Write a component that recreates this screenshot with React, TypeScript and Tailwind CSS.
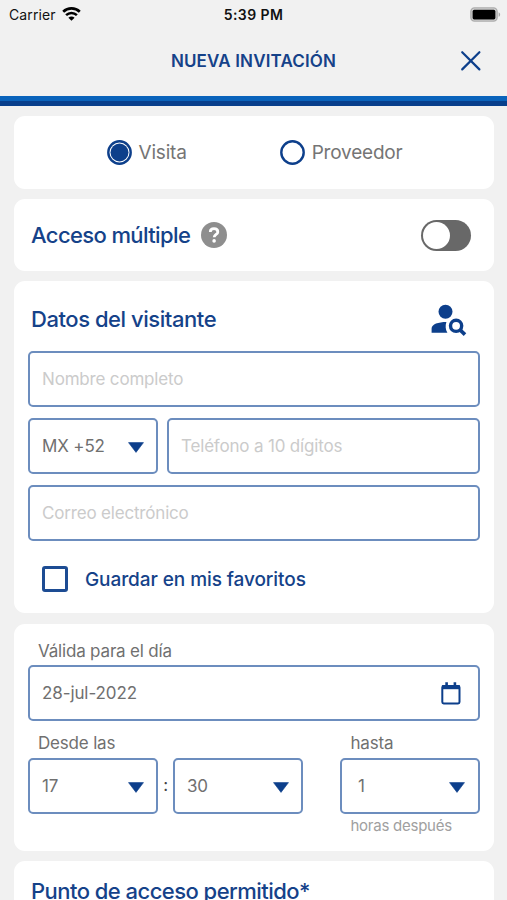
import React, { useState } from 'react';

function WifiIcon() {
  return (
    <svg width="19" height="14" viewBox="0 0 19 14" fill="none" stroke="#000">
      <path d="M1.2 4.7C5.8 0.3 13.2 0.3 17.8 4.7" strokeWidth="2.7" />
      <path d="M4.1 8.1C7.2 5.2 11.8 5.2 14.9 8.1" strokeWidth="2.6" />
      <path d="M9.5 13.8L6.4 10.7C8.2 9.2 10.8 9.2 12.6 10.7Z" fill="#000" stroke="none" />
    </svg>
  );
}

function BatteryIcon() {
  return (
    <svg width="31" height="15" viewBox="0 0 31 15">
      <rect x="0.9" y="0.9" width="26.2" height="13.2" rx="3.6" fill="#d2d2d2" stroke="#acacac" strokeWidth="1.4" />
      <rect x="2.6" y="2.8" width="22.8" height="9.6" rx="1.6" fill="#000" />
      <path d="M28.6 5.2C30.6 6 30.6 9 28.6 9.8Z" fill="#a9a9a9" />
    </svg>
  );
}

function HelpIcon() {
  return (
    <svg width="26" height="26" viewBox="0 0 26 26" fill="none">
      <circle cx="13" cy="13" r="13" fill="#8e8e8e" />
      <path d="M9.3 9.9C9.3 7.7 10.9 6.7 13 6.7C15.2 6.7 16.8 7.9 16.8 9.9C16.8 12.5 13.2 12.4 13.2 15.3" stroke="#fff" strokeWidth="2.8" />
      <circle cx="13.1" cy="18.9" r="1.8" fill="#fff" />
    </svg>
  );
}

function PersonSearchIcon() {
  return (
    <svg width="36" height="33" viewBox="0 0 36 33" fill="none" className="mt-[3px]">
      <circle cx="14.5" cy="7.8" r="7" fill="#0d3f8b" />
      <path d="M0.6 28.8V24.4C0.6 20.2 7.4 18 15.4 18C14.2 21.4 14.4 25.4 16.4 28.8Z" fill="#0d3f8b" />
      <circle cx="25.1" cy="21.8" r="5.6" stroke="#0d3f8b" strokeWidth="3.4" />
      <path d="M28.8 25.6L34 30.6" stroke="#0d3f8b" strokeWidth="3.6" />
    </svg>
  );
}

function CalendarIcon() {
  return (
    <svg width="20" height="23" viewBox="0 0 20 23" fill="none">
      <path d="M5.6 0.3V4M13.9 0.3V4" stroke="#0d3f8b" strokeWidth="2.6" />
      <rect x="1.3" y="4" width="17.2" height="17.4" rx="1.4" stroke="#0d3f8b" strokeWidth="2" />
      <path d="M1 3.2H18.8V7.2H1Z" fill="#0d3f8b" />
    </svg>
  );
}

function Caret() {
  return (
    <svg width="16" height="11" viewBox="0 0 16 11" className="mt-[3px] shrink-0">
      <path d="M0.5 0.6H15.5L8 10.4Z" fill="#0d3f8b" stroke="#0d3f8b" strokeWidth="0.6" strokeLinejoin="round" />
    </svg>
  );
}

function Select({ value, className }: { value: string; className: string }) {
  return (
    <button
      type="button"
      className={`flex h-14 shrink-0 items-center justify-between rounded-[5px] border-2 border-[#6c8dbe] text-[17px] tracking-[-0.15px] text-[#707070] ${className}`}
    >
      <span className="pt-px">{value}</span>
      <Caret />
    </button>
  );
}

function Radio({ label, checked, onSelect }: { label: string; checked: boolean; onSelect: () => void }) {
  return (
    <button type="button" onClick={onSelect} className="flex items-center gap-[7px]">
      <svg width="25" height="25" viewBox="0 0 25 25" fill="none">
        <circle cx="12.5" cy="12.5" r="11.2" stroke="#0d3f8b" strokeWidth="2.4" />
        {checked && <circle cx="12.5" cy="12.5" r="9" fill="#0d3f8b" />}
      </svg>
      <span className="pt-[2px] text-[19px] tracking-[-0.2px] text-[#757575]">{label}</span>
    </button>
  );
}

const fieldClass =
  'block h-14 rounded-[5px] border-2 border-[#6c8dbe] bg-white px-3 text-[17px] tracking-[-0.18px] text-[#707070] placeholder:text-[#cbcbcb] outline-none';

const titleClass = 'text-[22px] leading-[30px] font-medium text-[#154289]';

export default function App() {
  const [type, setType] = useState('visita');
  const [saved, setSaved] = useState(false);

  return (
    <div className="h-[900px] w-[507px] overflow-hidden bg-[#f1f1f1] font-['Inter',sans-serif]">
      {/* Status bar */}
      <div className="grid h-7 grid-cols-[1fr_80px_1fr] items-center pr-[6px] pl-[9px] text-[14px] text-[#111]">
        <div className="flex items-center gap-1.5">
          <span className="tracking-[0.1px]">Carrier</span>
          <WifiIcon />
        </div>
        <span className="-ml-[3px] text-center font-semibold tracking-[0.4px]">5:39 PM</span>
        <div className="flex justify-end">
          <BatteryIcon />
        </div>
      </div>

      {/* Header */}
      <header className="grid h-[68px] grid-cols-[60px_1fr_60px] items-center">
        <span />
        <h1 className="text-center text-[17px] font-semibold tracking-[0.15px] text-[#154289]">NUEVA INVITACIÓN</h1>
        <button type="button" aria-label="Cerrar" className="-mt-[2px] ml-[13px]">
          <svg width="22" height="22" viewBox="0 0 22 22" stroke="#0d3f8b" strokeWidth="2.2" strokeLinecap="round">
            <path d="M2.2 2.2L19.4 19.4M19.4 2.2L2.2 19.4" />
          </svg>
        </button>
      </header>
      <div className="h-[10px] border-b-[5px] border-[#083f8c] bg-[#0a63bb]" />

      <main className="flex flex-col gap-[10px] pt-[10px] pr-[13px] pl-[14px]">
        <section className="flex h-[73px] items-center gap-[93px] rounded-[11px] bg-white pl-[92.5px]">
          <Radio label="Visita" checked={type === 'visita'} onSelect={() => setType('visita')} />
          <Radio label="Proveedor" checked={type === 'proveedor'} onSelect={() => setType('proveedor')} />
        </section>

        <section className="flex h-[72px] items-center gap-[11px] rounded-[11px] bg-white pr-[23px] pl-[17px]">
          <h2 className={`${titleClass} tracking-[-0.62px]`}>Acceso múltiple</h2>
          <HelpIcon />
          <button type="button" role="switch" aria-checked="false" className="ml-auto flex h-[31px] w-[50px] items-center rounded-full bg-[#686868] pl-[1.5px]">
            <span className="size-[27px] rounded-full bg-white" />
          </button>
        </section>

        <section className="h-[332px] rounded-[11px] bg-white px-[14px] pt-4">
          <div className="flex h-[43px] items-center justify-between pr-[13px] pl-[3px]">
            <h2 className={`${titleClass} tracking-[-0.45px]`}>Datos del visitante</h2>
            <PersonSearchIcon />
          </div>
          <div className="mt-[11px] flex flex-col gap-[11px]">
            <input placeholder="Nombre completo" className={`${fieldClass} w-full`} />
            <div className="flex gap-[9px]">
              <Select value="MX +52" className="w-[130px] px-3" />
              <input placeholder="Teléfono a 10 dígitos" className={`${fieldClass} min-w-0 flex-1`} />
            </div>
            <input placeholder="Correo electrónico" className={`${fieldClass} w-full`} />
          </div>
          <label className="mt-[23px] flex items-center gap-[17px] pl-[14px]">
            <input
              type="checkbox"
              checked={saved}
              onChange={() => setSaved(!saved)}
              className="size-[26px] appearance-none rounded-[3px] border-[3px] border-[#1d4c93] checked:bg-[#0d3f8b]"
            />
            <span className="pt-[2px] text-[19px] font-medium tracking-[-0.08px] text-[#154289]">Guardar en mis favoritos</span>
          </label>
        </section>

        <section className="mt-px h-[227px] rounded-[11px] bg-white px-[14px] pt-[15px] text-[17px] tracking-[-0.18px] text-[#707070]">
          <p className="pl-[10px] leading-6">Válida para el día</p>
          <button type="button" className="mt-[2px] flex h-14 w-full items-center justify-between rounded-[5px] border-2 border-[#6c8dbe] pr-[17px] pl-3">
            <span className="pt-px tracking-[-0.1px]">28-jul-2022</span>
            <CalendarIcon />
          </button>
          <div className="mt-[10px] flex">
            <div>
              <p className="pl-[10px] leading-6">Desde las</p>
              <div className="mt-[3px] flex items-center">
                <Select value="17" className="w-[130px] px-3" />
                <span className="w-[15px] text-center text-[#444]">:</span>
                <Select value="30" className="w-[130px] px-3" />
              </div>
            </div>
            <div className="ml-auto w-[140px]">
              <p className="pl-[10.5px] leading-6">hasta</p>
              <Select value="1" className="mt-[3px] w-[140px] pr-[13px] pl-[16px]" />
              <p className="pt-[1px] pl-[10.5px] text-[15px] leading-[22px] tracking-[-0.25px] text-[#a0a0a0]">horas después</p>
            </div>
          </div>
        </section>

        <section className="h-20 rounded-[11px] bg-white pt-[15px] pl-[17px]">
          <h2 className={`${titleClass} tracking-[-0.54px]`}>Punto de acceso permitido*</h2>
        </section>
      </main>
    </div>
  );
}
